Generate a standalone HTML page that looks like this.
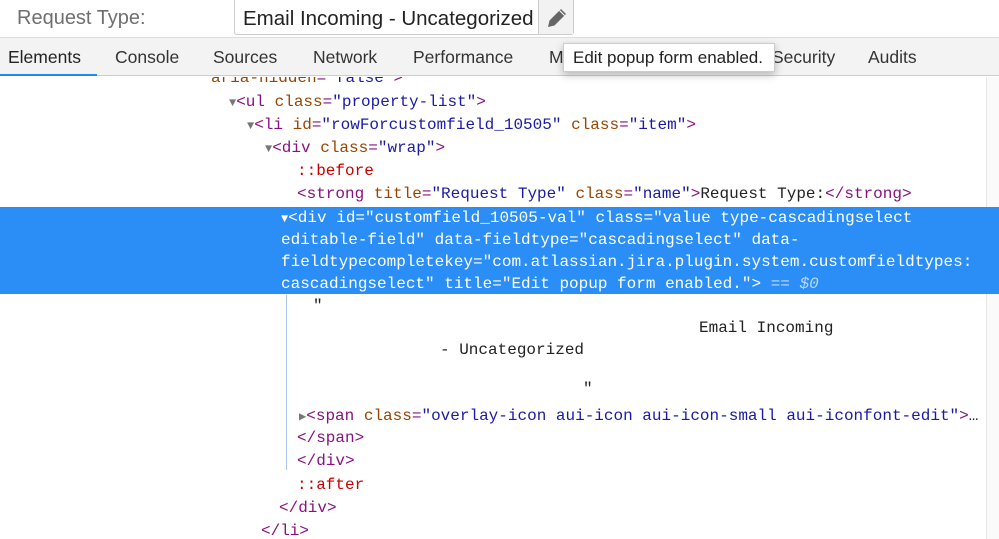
<!DOCTYPE html>
<html><head><style>
body{margin:0;width:999px;height:539px;overflow:hidden;background:#fff;position:relative;font-family:"Liberation Sans",sans-serif}
.top{position:absolute;left:0;top:0;width:999px;height:37px;background:#fff}
.lbl{position:absolute;left:17px;top:7px;font-size:20px;color:#6f6f6f}
.inp{position:absolute;left:234px;top:-2px;width:340px;height:37px;border:1px solid #ccc;border-radius:3px;background:#fff;box-sizing:border-box}
.inp span{position:absolute;left:8px;top:8px;font-size:20.5px;color:#222}
.pen{position:absolute;right:0;top:0;width:34px;height:35px;background:#f2f2f2;border-left:1px solid #ccc}
.tabs{position:absolute;left:0;top:37px;width:999px;height:39px;background:#f3f3f3;border-bottom:1px solid #cdcdcd;border-top:1px solid #ddd;box-sizing:border-box}
.tab{position:absolute;top:9px;font-size:17.5px;color:#333}
.ul{position:absolute;left:0;top:36px;width:97px;height:2px;background:#1a8cf0}
.tip{position:absolute;left:563px;top:43px;width:212px;height:29px;background:#fff;border:1px solid #ccc;box-sizing:border-box;box-shadow:0 3px 8px rgba(0,0,0,.25);font-size:17px;color:#222;padding:4px 0 0 9px}
.code{position:absolute;left:0;top:77px;width:999px;height:462px;overflow:hidden}
.l{position:absolute;font-family:"Liberation Mono",monospace;font-size:16px;white-space:pre;line-height:22px;color:#222}
.t{color:#881280}.a{color:#994500}.v{color:#1a1aa6}.p{color:#c80000}.g{color:#777;font-size:12px}
.sel{position:absolute;left:0;top:130px;width:999px;height:87px;background:#2b8ef6}
.sel .l,.sel .l span{color:#fff}
.vl{position:absolute;left:286px;top:218px;width:1px;height:175px;background:#a9c5ef}
.sb{position:absolute;right:0;top:0;width:12px;height:462px;border-left:1px solid #e6e6e6;background:#fafafa}
</style></head><body>
<div class="top">
<div class="lbl">Request Type:</div>
<div class="inp"><span>Email Incoming - Uncategorized</span>
<div class="pen"><svg width="34" height="35" viewBox="0 0 34 35"><path d="M9 28 L10.5 21.5 L22 10 L27 15 L15.5 26.5 Z" fill="#666"/><path d="M20.5 11.5 L25.5 16.5" stroke="#f2f2f2" stroke-width="1.2"/></svg></div></div>
</div>
<div class="tabs">
<div class="tab" style="left:8px;color:#222">Elements</div>
<div class="tab" style="left:115px">Console</div>
<div class="tab" style="left:213px">Sources</div>
<div class="tab" style="left:313px">Network</div>
<div class="tab" style="left:413px">Performance</div>
<div class="tab" style="left:549px">M</div>
<div class="tab" style="left:772px">Security</div>
<div class="tab" style="left:868px">Audits</div>
<div class="ul"></div>
</div>
<div class="code">
<div class="sb"></div>
<div class="l" style="left:211px;top:-10px"><span class="a">aria-hidden</span><span class="t">=</span><span class="v">"false"</span><span class="t">&gt;</span></div>
<div class="l" style="left:229px;top:14px"><span class="g">▼</span><span class="t">&lt;ul </span><span class="a">class</span><span class="t">=</span><span class="v">"property-list"</span><span class="t">&gt;</span></div>
<div class="l" style="left:247px;top:37px"><span class="g">▼</span><span class="t">&lt;li </span><span class="a">id</span><span class="t">=</span><span class="v">"rowForcustomfield_10505"</span> <span class="a">class</span><span class="t">=</span><span class="v">"item"</span><span class="t">&gt;</span></div>
<div class="l" style="left:265px;top:60px"><span class="g">▼</span><span class="t">&lt;div </span><span class="a">class</span><span class="t">=</span><span class="v">"wrap"</span><span class="t">&gt;</span></div>
<div class="l" style="left:297px;top:83px"><span class="p">::before</span></div>
<div class="l" style="left:297px;top:106px"><span class="t">&lt;strong </span><span class="a">title</span><span class="t">=</span><span class="v">"Request Type"</span> <span class="a">class</span><span class="t">=</span><span class="v">"name"</span><span class="t">&gt;</span>Request Type:<span class="t">&lt;/strong&gt;</span></div>
<div class="sel">
<div class="l" style="left:281px;top:0px"><span style="font-size:12px">▼</span>&lt;div id="customfield_10505-val" class="value type-cascadingselect</div>
<div class="l" style="left:281px;top:22px">editable-field" data-fieldtype="cascadingselect" data-</div>
<div class="l" style="left:281px;top:44px">fieldtypecompletekey="com.atlassian.jira.plugin.system.customfieldtypes:</div>
<div class="l" style="left:281px;top:66px">cascadingselect" title="Edit popup form enabled."&gt; <span style="color:#bcd8ff!important">== <i>$0</i></span></div>
</div>
<div class="vl"></div>
<div class="l" style="left:313px;top:218px">"</div>
<div class="l" style="left:699px;top:240px">Email Incoming</div>
<div class="l" style="left:440px;top:262px">- Uncategorized</div>
<div class="l" style="left:583px;top:301px">"</div>
<div class="l" style="left:299px;top:328px"><span class="g">▶</span><span class="t">&lt;span </span><span class="a">class</span><span class="t">=</span><span class="v">"overlay-icon aui-icon aui-icon-small aui-iconfont-edit"</span><span class="t">&gt;</span>…</div>
<div class="l" style="left:297px;top:350px"><span class="t">&lt;/span&gt;</span></div>
<div class="l" style="left:297px;top:373px"><span class="t">&lt;/div&gt;</span></div>
<div class="l" style="left:297px;top:397px"><span class="p">::after</span></div>
<div class="l" style="left:279px;top:420px"><span class="t">&lt;/div&gt;</span></div>
<div class="l" style="left:261px;top:443px"><span class="t">&lt;/li&gt;</span></div>
</div>
<div class="tip">Edit popup form enabled.</div>
</body></html>
